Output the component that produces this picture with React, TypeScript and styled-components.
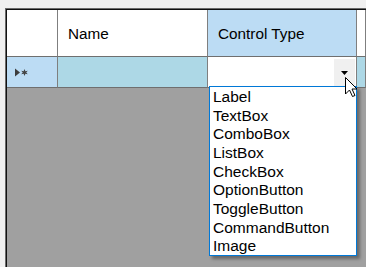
import styled, { createGlobalStyle } from 'styled-components';

const GlobalStyle = createGlobalStyle`
  html, body {
    margin: 0;
    padding: 0;
    background: #f0f0f0;
    overflow: hidden;
  }
  * {
    box-sizing: border-box;
  }
`;

const Page = styled.div`
  position: relative;
  width: 366px;
  height: 267px;
  padding: 8px 0 0 5px;
  font-family: 'Liberation Sans', Arial, sans-serif;
  font-size: 15px;
  color: #000;
`;

const OuterFrame = styled.div`
  height: 259px;
  border-top: 1px solid #6a6a6a;
  border-left: 1px solid #6a6a6a;
`;

const InnerFrame = styled.div`
  height: 100%;
  border-top: 1px solid #111;
  border-left: 1px solid #111;
  background: #a0a0a0;
  display: flex;
  flex-direction: column;
`;

const Row = styled.div<{ height: number }>`
  display: grid;
  grid-template-columns: 51px 150px 149px 1fr;
  height: ${({ height }) => height}px;
`;

const Cell = styled.div<{ bg: string }>`
  display: flex;
  align-items: center;
  background: ${({ bg }) => bg};
  border-right: 1px solid #7f7f7f;
  border-bottom: 1px solid #6f6f6f;
  position: relative;
`;

const HeaderText = styled.span`
  padding-left: 10px;
  line-height: 17px;
  font-size: 15.3px;
`;

const RowMarker = styled.svg`
  margin-left: 7px;
`;

const DropButton = styled.div`
  position: absolute;
  right: 1px;
  top: 2px;
  bottom: 1px;
  width: 21px;
  background: #f0f0f0;
  display: flex;
  align-items: center;
  justify-content: center;
`;

const List = styled.div`
  position: absolute;
  left: 209px;
  top: 86px;
  width: 148px;
  height: 170px;
  background: #fff;
  border: 1px solid #0078d7;
  box-shadow: 3px 3px 3px rgba(0, 0, 0, 0.35);
  padding: 1px 0 0 3px;
  overflow: hidden;
  font-size: 15.5px;
`;

const ListItem = styled.div`
  line-height: 18.65px;
  white-space: nowrap;
`;

const Cursor = styled.svg`
  position: absolute;
  left: 345px;
  top: 77px;
`;

const items = [
  'Label',
  'TextBox',
  'ComboBox',
  'ListBox',
  'CheckBox',
  'OptionButton',
  'ToggleButton',
  'CommandButton',
  'Image',
];

export default function App() {
  return (
    <>
      <GlobalStyle />
      <Page>
        <OuterFrame>
          <InnerFrame>
            <Row height={47}>
              <Cell bg="#fff" />
              <Cell bg="#fff">
                <HeaderText>Name</HeaderText>
              </Cell>
              <Cell bg="#bcdcf4">
                <HeaderText>Control Type</HeaderText>
              </Cell>
              <Cell bg="#fff" />
            </Row>
            <Row height={31}>
              <Cell bg="#bcdcf4">
                <RowMarker width="15" height="9" viewBox="0 0 15 9">
                  <path d="M1 0.5 L6 4.5 L1 8.5 Z" fill="#3c3c3c" />
                  <path
                    d="M10.5 1 L11.4 3.2 L13.8 2.8 L12.2 4.5 L13.8 6.2 L11.4 5.8 L10.5 8 L9.6 5.8 L7.2 6.2 L8.8 4.5 L7.2 2.8 L9.6 3.2 Z"
                    fill="#444"
                  />
                </RowMarker>
              </Cell>
              <Cell bg="#add8e6" />
              <Cell bg="#fff">
                <DropButton>
                  <svg width="7" height="4" viewBox="0 0 7 4">
                    <path d="M0 0 H7 L3.5 4 Z" fill="#000" />
                  </svg>
                </DropButton>
              </Cell>
              <Cell bg="#add8e6" />
            </Row>
          </InnerFrame>
        </OuterFrame>
        <List>
          {items.map((item) => (
            <ListItem key={item}>{item}</ListItem>
          ))}
        </List>
        <Cursor width="13" height="21" viewBox="0 0 13 21">
          <path
            d="M0.5 0.5 L0.5 17 L4.5 13 L7.5 19.5 L10 18.5 L7 12 L12 12 Z"
            fill="#fff"
            stroke="#000"
            strokeWidth="1"
            strokeLinejoin="miter"
          />
        </Cursor>
      </Page>
    </>
  );
}
